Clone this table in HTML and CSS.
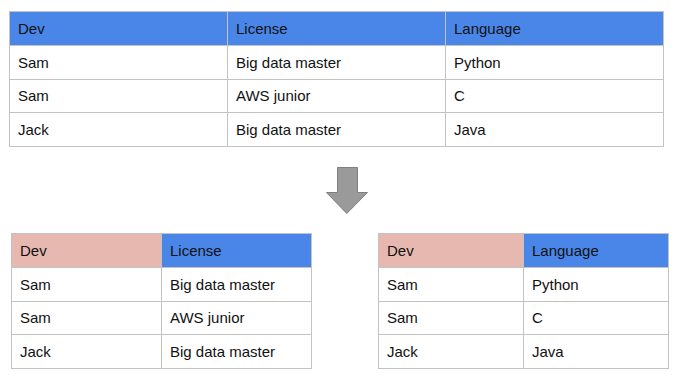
FILE: index.html
```html
<!DOCTYPE html>
<html>
<head>
<meta charset="utf-8">
<link rel="stylesheet" href="styles.css">
</head>
<body>
<div class="page">
  <table class="grid grid-top">
    <colgroup><col class="c-top"><col class="c-top"><col class="c-top"></colgroup>
    <thead>
      <tr><th class="blue">Dev</th><th class="blue">License</th><th class="blue">Language</th></tr>
    </thead>
    <tbody>
      <tr><td>Sam</td><td>Big data master</td><td>Python</td></tr>
      <tr><td>Sam</td><td>AWS junior</td><td>C</td></tr>
      <tr><td>Jack</td><td>Big data master</td><td>Java</td></tr>
    </tbody>
  </table>

  <div class="arrow-row">
    <svg class="arrow" width="43" height="48" viewBox="0 0 43 48">
      <polygon points="11.5,0.5 31.5,0.5 31.5,25.5 41.5,25.5 20.75,46.5 0.5,25.5 11.5,25.5" fill="#9a9a9a" stroke="#7f7f7f" stroke-width="1"/>
    </svg>
  </div>

  <div class="bottom">
    <table class="grid grid-left">
      <colgroup><col class="c-left"><col class="c-left"></colgroup>
      <thead>
        <tr><th class="pink">Dev</th><th class="blue">License</th></tr>
      </thead>
      <tbody>
        <tr><td>Sam</td><td>Big data master</td></tr>
        <tr><td>Sam</td><td>AWS junior</td></tr>
        <tr><td>Jack</td><td>Big data master</td></tr>
      </tbody>
    </table>
    <table class="grid grid-right">
      <colgroup><col class="c-right"><col class="c-right"></colgroup>
      <thead>
        <tr><th class="pink">Dev</th><th class="blue">Language</th></tr>
      </thead>
      <tbody>
        <tr><td>Sam</td><td>Python</td></tr>
        <tr><td>Sam</td><td>C</td></tr>
        <tr><td>Jack</td><td>Java</td></tr>
      </tbody>
    </table>
  </div>
</div>
</body>
</html>
```

FILE: styles.css
```css
html, body {
  margin: 0;
  padding: 0;
  background: #ffffff;
}

body {
  font-family: "Liberation Sans", Arial, sans-serif;
  font-size: 15px;
  color: #111111;
}

.page {
  display: flex;
  flex-direction: column;
  width: 680px;
  padding-top: 11px;
}

.grid {
  border-collapse: collapse;
  table-layout: fixed;
}

.grid th,
.grid td {
  border: 1px solid #c3c3c3;
  height: 32.75px;
  padding: 0 8px;
  text-align: left;
  vertical-align: middle;
  font-weight: normal;
  white-space: nowrap;
  line-height: 17px;
}

.grid-top {
  margin-left: 9px;
  width: 655px;
}

.c-top { width: 218px; }

.blue { background: #4a86e8; }
.pink { background: #e6b8af; }

.arrow-row {
  display: flex;
  padding-left: 326px;
  padding-top: 20px;
  height: 66px;
}

.arrow { display: block; }

.bottom {
  display: flex;
  justify-content: space-between;
  padding: 0 11px;
}

.grid-left { width: 301px; }
.c-left { width: 150px; }

.grid-right { width: 290px; }
.c-right { width: 145px; }
```
